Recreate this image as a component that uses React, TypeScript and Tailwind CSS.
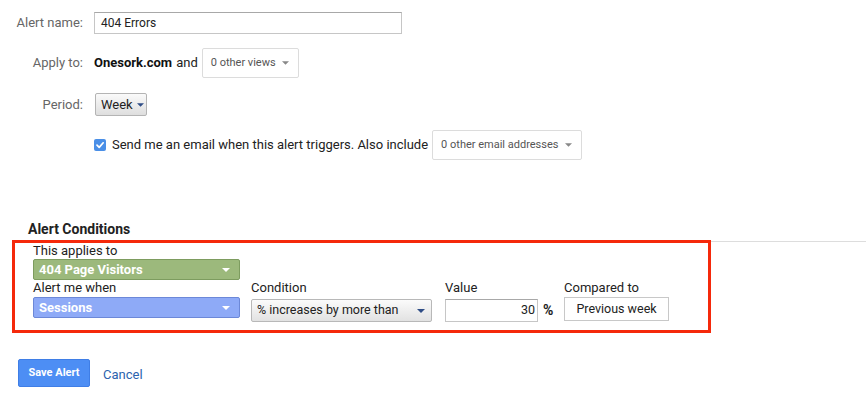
import React from "react";

function Caret({ color = "#777", w = 8, h = 4 }: { color?: string; w?: number; h?: number }) {
  return (
    <svg width={w} height={h} viewBox="0 0 8 4" className="shrink-0">
      <polygon points="0,0 8,0 4,4" fill={color} />
    </svg>
  );
}

function FlatDropdown({ label, width }: { label: string; width: string }) {
  return (
    <div
      className={`${width} h-[30px] flex items-center justify-between pl-[8px] pr-[9px] border border-[#dcdcdc] rounded-[2px] bg-white text-[11px] text-[#555]`}
    >
      <span>{label}</span>
      <Caret color="#888" w={7} h={4} />
    </div>
  );
}

export default function App() {
  return (
    <div className="w-[866px] h-[402px] bg-white font-['Roboto',sans-serif] text-[13px] text-[#222] overflow-hidden">
      <div className="pt-[12px]">
        {/* Alert name */}
        <div className="flex items-center h-[22px]">
          <div className="w-[83px] text-right text-[#666]">Alert name:</div>
          <div className="ml-[11px] w-[308px] h-[22px] flex items-center px-[6px] border border-[#c6c6c6] border-t-[#a8a8a8] text-[12px] text-[#222]">
            404 Errors
          </div>
        </div>

        {/* Apply to */}
        <div className="flex items-center h-[30px] mt-[14px]">
          <div className="w-[83px] text-right text-[#666]">Apply to:</div>
          <div className="ml-[11px] flex items-center">
            <span className="font-bold text-[#111]">Onesork.com</span>
            <span className="ml-[4px] text-[#222]">and</span>
          </div>
          <div className="ml-[4px]">
            <FlatDropdown label="0 other views" width="w-[97px]" />
          </div>
        </div>

        {/* Period */}
        <div className="flex items-center h-[23px] mt-[15px]">
          <div className="w-[83px] text-right text-[#666]">Period:</div>
          <div className="ml-[12px] w-[52px] h-[23px] flex items-center gap-[4px] pl-[5px] border border-[#b4b4b4] rounded-[2px] bg-gradient-to-b from-[#fafafa] to-[#dedede] text-[13px] text-[#222]">
            <span>Week</span>
            <Caret color="#2f4d86" w={7} h={4} />
          </div>
        </div>

        {/* Email */}
        <div className="flex items-center h-[30px] mt-[14px] pl-[94px]">
          <span className="w-[12px] h-[12px] rounded-[2px] bg-[#4a8fe7] flex items-center justify-center">
            <svg width="10" height="10" viewBox="0 0 10 10">
              <polyline points="2,5.2 4.2,7.4 8.2,2.8" fill="none" stroke="#fff" strokeWidth="1.7" strokeLinecap="round" strokeLinejoin="round" />
            </svg>
          </span>
          <span className="ml-[6px] text-[#222]">Send me an email when this alert triggers. Also include</span>
          <div className="ml-[4px]">
            <FlatDropdown label="0 other email addresses" width="w-[150px]" />
          </div>
        </div>

        {/* Alert Conditions */}
        <div className="mt-[60px] pl-[28px] text-[14px] leading-[18px] font-bold text-[#222]">Alert Conditions</div>

        <div className="mt-[2px] flex">
          <div className="ml-[12px] w-[699px] border-[3px] border-[#f5290b] pl-[18px] pb-[8px]">
            <div className="leading-[15px] text-[#222]">This applies to</div>
            <div className="mt-[1px] w-[207px] h-[21px] flex items-center justify-between pl-[5px] pr-[9px] bg-[#9cb97c] border border-[#7d9c5f] rounded-[2px] text-white font-bold text-[13px]">
              <span>404 Page Visitors</span>
              <Caret color="#fff" w={8} h={4} />
            </div>

            <div className="flex">
              <div className="w-[207px]">
                <div className="leading-[15px]">Alert me when</div>
                <div className="mt-[2px] w-[207px] h-[21px] flex items-center justify-between pl-[5px] pr-[9px] bg-[#8eaaf7] border border-[#6c88d8] rounded-[2px] text-white font-bold text-[13px]">
                  <span>Sessions</span>
                  <Caret color="#fff" w={8} h={4} />
                </div>
              </div>

              <div className="ml-[11px] w-[181px]">
                <div className="leading-[15px]">Condition</div>
                <div className="mt-[4px] w-[181px] h-[23px] flex items-center justify-between pl-[5px] pr-[6px] border border-[#b8b8b8] rounded-[2px] bg-gradient-to-b from-[#fbfbfb] to-[#e2e2e2] text-[12.5px] text-[#222]">
                  <span>% increases by more than</span>
                  <Caret color="#2f4d86" w={8} h={4} />
                </div>
              </div>

              <div className="ml-[13px] w-[119px]">
                <div className="leading-[15px]">Value</div>
                <div className="mt-[4px] flex items-center">
                  <div className="w-[93px] h-[23px] flex items-center justify-end pr-[2px] border border-[#c6c6c6] border-t-[#a8a8a8] text-[12.5px] text-[#222]">
                    30
                  </div>
                  <span className="ml-[5px] font-bold text-[14px] text-[#222]">%</span>
                </div>
              </div>

              <div>
                <div className="leading-[15px]">Compared to</div>
                <div className="mt-[2px] w-[105px] h-[24px] flex items-center justify-center border border-[#c8c8c8] text-[12.5px] text-[#222]">
                  Previous week
                </div>
              </div>
            </div>
          </div>
          <div className="flex-1 mt-[1px] border-t border-[#dddddd]" />
        </div>

        {/* Actions */}
        <div className="mt-[26px] ml-[18px] flex items-center">
          <button className="w-[72px] h-[28px] rounded-[2px] bg-[#4d8ef4] border border-[#3f7ee6] text-white font-bold text-[11px]">
            Save Alert
          </button>
          <span className="ml-[13px] mt-[3px] text-[#2c63ae] text-[13px]">Cancel</span>
        </div>
      </div>
    </div>
  );
}
